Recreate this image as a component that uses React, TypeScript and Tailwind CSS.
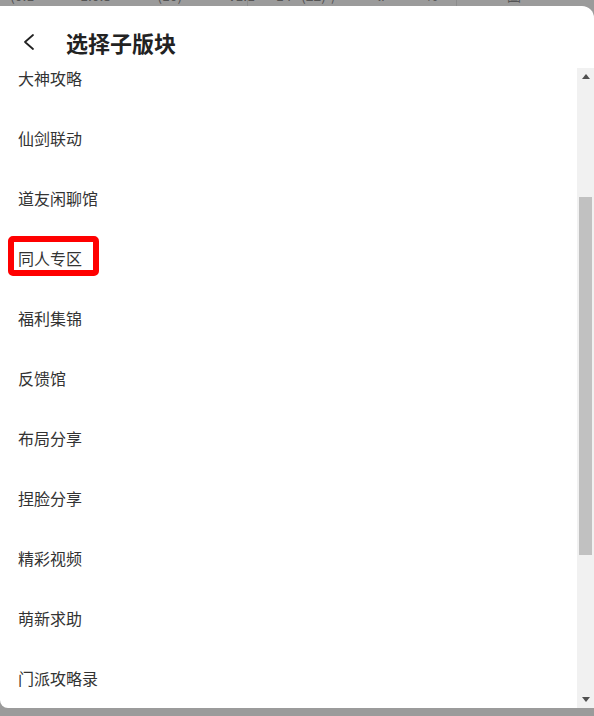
import React, { useEffect, useRef } from "react";

const items = [
  "全部",
  "官方公告",
  "综合讨论",
  "大神攻略",
  "仙剑联动",
  "道友闲聊馆",
  "同人专区",
  "福利集锦",
  "反馈馆",
  "布局分享",
  "捏脸分享",
  "精彩视频",
  "萌新求助",
  "门派攻略录",
  "活动专区",
  "问答专区",
  "版务公告",
  "其他",
];

const font = { fontFamily: '"Noto Sans CJK SC", "Noto Sans", sans-serif' };

export default function App() {
  const listRef = useRef<HTMLDivElement>(null);
  useEffect(() => {
    if (listRef.current) listRef.current.scrollTop = 200;
  }, []);

  return (
    <div
      className="w-[594px] h-[716px] bg-[#9b9b9b] flex flex-col overflow-hidden"
      style={font}
    >
      {/* backdrop strip */}
      <div className="h-[6px] shrink-0 overflow-hidden flex text-[14px] leading-[16px] text-[#555]">
        <div className="w-[248px] -mt-[13px] flex gap-[46px] pl-[10px] border-r border-[#8c8c8c]">
          <span>(0.1</span>
          <span>1.0.5</span>
          <span>(10)</span>
          <span>v1.1</span>
          <span>(22)</span>
        </div>
        <div className="w-[209px] -mt-[13px] flex gap-[40px] pl-[28px] border-r border-[#8c8c8c]">
          <span>14</span>
          <span>/</span>
          <span>li</span>
          <span>%</span>
        </div>
        <div className="flex-1 -mt-[13px] pl-[50px]">
          <span>圖</span>
        </div>
      </div>

      {/* modal */}
      <div className="h-[702px] shrink-0 bg-white rounded-tr-[12px] rounded-bl-[8px] flex flex-col overflow-hidden">
        <div className="h-[62px] shrink-0 flex items-center pt-[10px]">
          <div className="w-[66px] flex items-center pl-[21px]">
            <svg width="16" height="18" viewBox="0 0 16 18" fill="none">
              <polyline
                points="12,2 4,9 12,16"
                stroke="#222"
                strokeWidth="1.8"
                strokeLinecap="round"
                strokeLinejoin="round"
              />
            </svg>
          </div>
          <div className="text-[22px] font-bold text-[#222] leading-none">
            选择子版块
          </div>
        </div>

        <div className="flex-1 flex min-h-0">
          <div ref={listRef} className="flex-1 overflow-hidden">
            {items.map((t) => (
              <div
                key={t}
                className="h-[60px] flex items-center pl-[18px] text-[16px] text-[#333]"
              >
                {t === "同人专区" ? (
                  <span className="relative leading-[22px]">
                    {t}
                    <span className="absolute left-[-10px] right-[-17px] top-[-11px] bottom-[-7px] border-[6px] border-[#ff0000] rounded-[5px]" />
                  </span>
                ) : (
                  <span className="leading-[22px]">{t}</span>
                )}
              </div>
            ))}
          </div>

          {/* scrollbar */}
          <div className="w-[17px] shrink-0 bg-[#f1f1f1] flex flex-col">
            <div className="h-[17px] shrink-0 flex items-center justify-center">
              <svg width="8" height="5" viewBox="0 0 8 5">
                <polygon points="4,0 8,5 0,5" fill="#505050" />
              </svg>
            </div>
            <div className="flex-1 px-[2px]">
              <div className="mt-[112px] h-[358px] bg-[#c1c1c1]" />
            </div>
            <div className="h-[17px] shrink-0 flex items-center justify-center">
              <svg width="8" height="5" viewBox="0 0 8 5">
                <polygon points="0,0 8,0 4,5" fill="#505050" />
              </svg>
            </div>
          </div>
        </div>
      </div>
    </div>
  );
}
